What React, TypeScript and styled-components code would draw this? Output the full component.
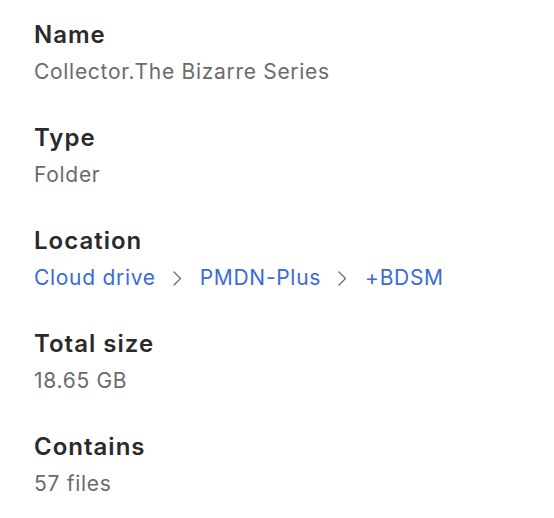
import styled, { createGlobalStyle } from "styled-components";

const GlobalStyle = createGlobalStyle`
  body {
    margin: 0;
    background: #ffffff;
    font-family: Inter, "Noto Sans", sans-serif;
  }
`;

const details = [
  { label: "Name", value: "Collector.The Bizarre Series" },
  { label: "Type", value: "Folder" },
  { label: "Location", path: ["Cloud drive", "PMDN-Plus", "+BDSM"] },
  { label: "Total size", value: "18.65 GB" },
  { label: "Contains", value: "57 files" },
];

const Chevron = () => (
  <svg width="10" height="17" viewBox="0 0 10 17" fill="none">
    <path d="M2 2 L8.5 8.5 L2 15" stroke="#6a6a6a" strokeWidth="1.3" strokeLinecap="round" strokeLinejoin="round" />
  </svg>
);

const App = () => {
  return (
    <>
      <GlobalStyle />
      <Panel>
        {details.map((d) => (
          <Group key={d.label}>
            <Label>{d.label}</Label>
            {d.path ? (
              <Crumbs>
                {d.path.map((p, i) => (
                  <Crumb key={p}>
                    {i > 0 && <Chevron />}
                    <Link>{p}</Link>
                  </Crumb>
                ))}
              </Crumbs>
            ) : (
              <Value>{d.value}</Value>
            )}
          </Group>
        ))}
      </Panel>
    </>
  );
};

export default App;

const Panel = styled.div`
  display: flex;
  flex-direction: column;
  gap: 37px;
  padding: 20px 0 0 34px;
`;

const Group = styled.div`
  display: flex;
  flex-direction: column;
  gap: 8px;
`;

const Label = styled.div`
  font-size: 24px;
  font-weight: 600;
  letter-spacing: 1px;
  line-height: 30px;
  color: #2a2a2a;
`;

const Value = styled.div`
  font-size: 21px;
  letter-spacing: 0.7px;
  line-height: 28px;
  color: #6b6b6b;
`;

const Crumbs = styled.div`
  display: flex;
  align-items: center;
  gap: 16px;
  font-size: 21px;
  letter-spacing: 0.7px;
  line-height: 28px;
`;

const Crumb = styled.div`
  display: flex;
  align-items: center;
  gap: 18px;
`;

const Link = styled.span`
  color: #3a6bd6;
`;
